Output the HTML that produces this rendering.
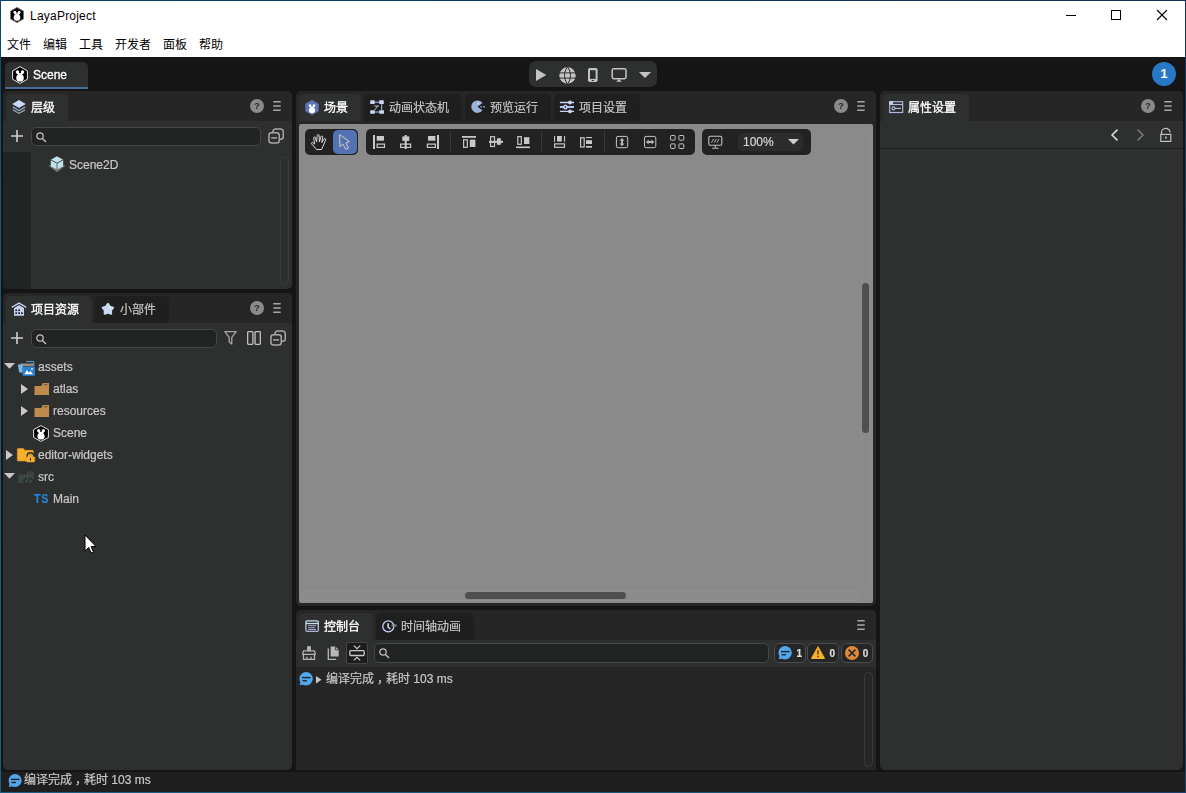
<!DOCTYPE html>
<html lang="zh-CN">
<head>
<meta charset="utf-8">
<title>LayaProject</title>
<style>
*{box-sizing:border-box;margin:0;padding:0}
html,body{width:1186px;height:793px;overflow:hidden;background:#151515}
body{position:relative;font-family:"Liberation Sans","Noto Sans CJK SC",sans-serif;font-size:12px;line-height:14px;color:#c8c8c8;cursor:default}
.a{position:absolute}
svg{position:absolute;display:block;overflow:visible}
.t{position:absolute;white-space:nowrap;line-height:14px;height:14px}
/* window frame */
#titlebar{left:1px;top:1px;width:1184px;height:56px;background:#fff;color:#000}
.menu{top:37px;color:#000;font-size:12px}
/* generic panel */
.panel{background:#2e3030;border-radius:5px;overflow:hidden;will-change:transform;-webkit-text-stroke:.2px}
#status{-webkit-text-stroke:.2px}
.hdr{left:0;top:0;right:0;height:30px;background:#262626}
.tab{top:3px;height:27px;border-radius:5px 5px 0 0;background:#1f1f1f;color:#c4c4c4}
.tab.on{background:#2e3030;color:#fff;-webkit-text-stroke:.3px #fff}
.tab .t{top:7px}
.help{width:14px;height:14px;border-radius:7px;background:#8a8a8a;color:#262727;font-weight:bold;font-size:9.5px;line-height:14.5px;text-align:center;-webkit-text-stroke:0;color:#2a2a2a}
.search{height:19px;border:1px solid #454747;border-radius:5px;background:#222323}
.grp{background:#222;border-radius:5px;height:26px;top:5px}
.sep{width:1px;background:#3a3a3a;top:2px;height:20px}
.cnt{top:3px;width:32px;height:20px;border:1px solid #4a4c4c;border-radius:5px;background:#262626}
.cnt .t{top:2.5px;font-weight:bold;color:#ddd;font-size:10px}
.row{left:0;height:22px;width:289px}
.row .t{top:4px;color:#c8c8c8}
.vtrack{width:9px;border:1px solid #393b3b;border-radius:5px}
</style>
</head>
<body>
<!-- TITLE BAR -->
<div class="a" id="titlebar">
  <div class="t" style="left:29px;top:8px;font-size:12px;letter-spacing:.22px">LayaProject</div>
  <div class="t menu" style="left:6px">文件</div>
  <div class="t menu" style="left:42px">编辑</div>
  <div class="t menu" style="left:78px">工具</div>
  <div class="t menu" style="left:114px">开发者</div>
  <div class="t menu" style="left:162px">面板</div>
  <div class="t menu" style="left:198px">帮助</div>
</div>

<!-- TOP DARK BAR -->
<div class="a" id="scenetab" style="will-change:transform;left:5px;top:62px;width:83px;height:27px;background:#2e3030;border-radius:5px 5px 0 0;border-bottom:2px solid #4a6a9c">
  <div class="t" style="left:28px;top:6px;color:#fff;-webkit-text-stroke:.3px #fff">Scene</div>
</div>
<div class="a" id="playstrip" style="left:529px;top:61px;width:128px;height:26px;border-radius:7px;background:#2e3030"></div>
<div class="a" id="badge" style="will-change:transform;left:1152px;top:62px;width:24px;height:24px;border-radius:12px;background:#2878c8;color:#fff;font-weight:bold;font-size:13px;line-height:24px;text-align:center">1</div>

<!-- P1 HIERARCHY -->
<div class="a panel" id="p1" style="left:3px;top:91px;width:289px;height:198px">
  <div class="a hdr"></div>
  <div class="a tab on" style="left:3px;width:62px"><div class="t" style="left:25px">层级</div></div>
  <div class="a help" style="left:247px;top:8px">?</div>
  <div class="a search" style="left:28px;top:36px;width:230px"></div>
  <div class="a" style="left:0;top:61px;width:28px;height:137px;background:#222323"></div>
  <div class="t" style="left:66px;top:67px">Scene2D</div>
  <div class="a vtrack" style="left:277px;top:65px;height:129px"></div>
</div>

<!-- P2 PROJECT -->
<div class="a panel" id="p2" style="left:3px;top:293px;width:289px;height:477px">
  <div class="a hdr"></div>
  <div class="a tab on" style="left:3px;width:86px"><div class="t" style="left:25px">项目资源</div></div>
  <div class="a tab" style="left:92px;width:74px"><div class="t" style="left:25px">小部件</div></div>
  <div class="a help" style="left:247px;top:8px">?</div>
  <div class="a search" style="left:28px;top:36px;width:186px"></div>
  <div class="a row" style="top:63px"><div class="t" style="left:35px">assets</div></div>
  <div class="a row" style="top:85px"><div class="t" style="left:50px">atlas</div></div>
  <div class="a row" style="top:107px"><div class="t" style="left:50px">resources</div></div>
  <div class="a row" style="top:129px"><div class="t" style="left:50px">Scene</div></div>
  <div class="a row" style="top:151px"><div class="t" style="left:35px">editor-widgets</div></div>
  <div class="a row" style="top:173px"><div class="t" style="left:35px">src</div></div>
  <div class="a row" style="top:195px"><div class="t" style="left:30.500px;color:#2484dc;font-weight:bold;font-size:13px;letter-spacing:.7px;-webkit-text-stroke:.15px;transform:scaleX(.83);transform-origin:0 50%">TS</div><div class="t" style="left:50px">Main</div></div>
</div>

<!-- P3 SCENE -->
<div class="a panel" id="p3" style="left:296px;top:91px;width:580px;height:515px;background:#262626">
  <div class="a hdr"></div>
  <div class="a tab on" style="left:3px;width:62px"><div class="t" style="left:25px">场景</div></div>
  <div class="a tab" style="left:68px;width:98px"><div class="t" style="left:25px">动画状态机</div></div>
  <div class="a tab" style="left:169px;width:86px"><div class="t" style="left:25px">预览运行</div></div>
  <div class="a tab" style="left:258px;width:86px"><div class="t" style="left:25px">项目设置</div></div>
  <div class="a help" style="left:538px;top:8px">?</div>
  <div class="a" id="viewport" style="left:3px;top:33px;width:574px;height:479px;background:#8a8a8a;border-radius:2px">
    <div class="a grp" style="left:6px;width:53px"><div class="a" style="left:28px;top:1px;width:24px;height:24px;border-radius:5px;background:#5272b4"></div></div>
    <div class="a grp" style="left:67px;width:329px">
      <div class="a sep" style="left:84px"></div>
      <div class="a sep" style="left:175px"></div>
      <div class="a sep" style="left:238px"></div>
    </div>
    <div class="a grp" style="left:403px;width:109px">
      <div class="a" style="left:36px;top:4px;width:65px;height:18px;border-radius:5px;background:#2c2c2c"><div class="t" style="left:5px;top:2px;color:#d4d4d4;-webkit-text-stroke:.2px #d4d4d4">100%</div></div>
    </div>
    <div class="a" style="left:562px;top:2px;width:10px;height:464px;border:1px solid #919191;border-radius:5px;opacity:.6"></div>
    <div class="a" style="left:2px;top:467px;width:558px;height:10px;border:1px solid #939393;border-radius:5px;opacity:.6"></div>
    <div class="a" style="left:563px;top:159px;width:7px;height:150px;border-radius:4px;background:#4f4f4f"></div>
    <div class="a" style="left:166px;top:468px;width:161px;height:7px;border-radius:4px;background:#4f4f4f"></div>
  </div>
</div>

<!-- P4 CONSOLE -->
<div class="a panel" id="p4" style="left:296px;top:610px;width:580px;height:160px;border-radius:5px 5px 0 0">
  <div class="a hdr"></div>
  <div class="a tab on" style="left:3px;width:74px"><div class="t" style="left:25px">控制台</div></div>
  <div class="a tab" style="left:80px;width:98px"><div class="t" style="left:25px">时间轴动画</div></div>
  <div class="a" id="ctb" style="left:0;top:30px;width:580px;height:27px">
    <div class="a" style="left:50px;top:2px;width:22px;height:22px;background:#1c1c1c;border:1px solid #454747;border-radius:2px"></div>
    <div class="a search" style="left:78px;top:3px;width:395px;height:20px"></div>
    <div class="a cnt" style="left:478px"><div class="t" style="left:21.5px">1</div></div>
    <div class="a cnt" style="left:511.400px"><div class="t" style="left:21px">0</div></div>
    <div class="a cnt" style="left:544.700px"><div class="t" style="left:21px">0</div></div>
  </div>
  <div class="a" id="log" style="left:0;top:57px;width:580px;height:103px;background:#262626">
    <div class="t" style="left:30px;top:5px">编译完成<span style="position:relative;left:3px">，</span>耗时 103 ms</div>
    <div class="a vtrack" style="left:568px;top:5px;height:95px"></div>
  </div>
</div>

<!-- P5 PROPERTIES -->
<div class="a panel" id="p5" style="left:880px;top:91px;width:303px;height:679px">
  <div class="a hdr"></div>
  <div class="a tab on" style="left:3px;width:86px"><div class="t" style="left:25px">属性设置</div></div>
  <div class="a help" style="left:261px;top:8px">?</div>
  <div class="a" style="left:0;top:57px;width:303px;height:1px;background:#1e1f1f"></div>
</div>

<!-- STATUS BAR -->
<div class="a" id="status" style="will-change:transform;left:1px;top:772px;width:1184px;height:20px;background:#1f1f1f">
  <div class="t" style="left:23px;top:1px;color:#c8c8c8">编译完成<span style="position:relative;left:3px">，</span>耗时 103 ms</div>
</div>

<!--ICONS-START-->
<!-- ICON LAYER (page coordinates) -->
<div class="a" id="icons" style="left:0;top:0;width:1186px;height:793px;z-index:20">

<!-- title icon -->
<svg style="left:10px;top:7px" width="14" height="16" viewBox="0 0 14 16"><path d="M7 .4 13.5 4.1v7.8L7 15.6.5 11.900V4.100z" fill="#000" stroke="#777" stroke-width=".9"/><circle cx="4.900" cy="5.300" r="1.400" fill="#fff"/><circle cx="9.100" cy="5.300" r="1.400" fill="#fff"/><path d="M3.900 6.200 5 5.200 7 6.600 9 5.200 10.100 6.200 8.600 8 5.400 8z" fill="#fff"/><circle cx="7" cy="10.600" r="3.300" fill="#fff"/></svg>
<!-- window controls -->
<svg style="left:1066px;top:15px" width="10" height="1" viewBox="0 0 10 1"><rect width="10" height="1" fill="#000"/></svg>
<svg style="left:1111px;top:10px" width="10" height="10" viewBox="0 0 10 10"><rect x=".5" y=".5" width="9" height="9" fill="none" stroke="#000" stroke-width="1"/></svg>
<svg style="left:1157px;top:10px" width="10" height="10" viewBox="0 0 10 10"><path d="M0 0 10 10M10 0 0 10" stroke="#000" stroke-width="1.100" fill="none"/></svg>

<!-- scene tab icon -->
<svg style="left:12px;top:66px" width="16" height="18" viewBox="0 0 16 18"><path d="M8 .6 15.400 4.800v8.400L8 17.400.6 13.200V4.800z" fill="#000" stroke="#e8e8e8" stroke-width="1"/><circle cx="5.500" cy="5.900" r="1.650" fill="#fff"/><circle cx="10.500" cy="5.900" r="1.650" fill="#fff"/><path d="M4.300 6.900 5.600 5.800 8 7.400 10.400 5.800 11.700 6.900 9.900 9 6.100 9z" fill="#fff"/><ellipse cx="8" cy="11.900" rx="3.800" ry="3.600" fill="#fff"/></svg>

<!-- play strip -->
<svg style="left:536px;top:69px" width="11" height="12" viewBox="0 0 11 12"><path d="M0 0 10.300 6 0 12z" fill="#c4c4c4"/></svg>
<svg style="left:558.500px;top:66.500px" width="17" height="17" viewBox="0 0 17 17"><circle cx="8.500" cy="8.500" r="8.200" fill="#c4c4c4"/><g fill="none" stroke="#2e3030" stroke-width="1"><path d="M0 5.900H17M0 11.100H17"/><path d="M8.500 .2C4.500 4.500 4.500 12.500 8.500 16.800M8.500 .2C12.500 4.500 12.500 12.500 8.500 16.800"/></g></svg>
<svg style="left:588px;top:68px" width="10" height="14" viewBox="0 0 10 14"><rect x="0" y="0" width="9.600" height="14" rx="1.800" fill="#c4c4c4"/><rect x="2" y="2.200" width="5.600" height="8.700" fill="#2e3030"/><rect x="3.800" y="12" width="2" height="1" fill="#2e3030"/></svg>
<svg style="left:611px;top:68px" width="16" height="14" viewBox="0 0 16 14"><rect x="1.200" y=".7" width="13.800" height="10" rx="1.600" fill="none" stroke="#c4c4c4" stroke-width="1.500"/><path d="M8 11 10.800 13.800H5.200z" fill="#c4c4c4"/></svg>
<svg style="left:639px;top:72px" width="12" height="6" viewBox="0 0 12 6"><path d="M0 0H12L6 6z" fill="#c4c4c4"/></svg>

<!-- P1 header -->
<svg style="left:12px;top:100px" width="14" height="14" viewBox="0 0 14 14"><path d="M.9 7 7 10.600 13.100 7" fill="none" stroke="#9dc3ec" stroke-width="1.100"/><path d="M.9 9.800 7 13.400 13.100 9.800" fill="none" stroke="#b0b0cc" stroke-width="1.100"/><path d="M7 0 13.800 4 7 8 .2 4z" fill="#c8d8f5"/></svg>
<svg style="left:273px;top:101px" width="8" height="10" viewBox="0 0 8 10"><path d="M.3 .8H7.700M.3 5H7.700M.3 9.200H7.700" stroke="#a8a8a8" stroke-width="1.500"/></svg>
<!-- P1 toolbar -->
<svg style="left:11px;top:130px" width="12" height="12" viewBox="0 0 12 12"><path d="M6 0V12M0 6H12" stroke="#d0d0d0" stroke-width="1.600"/></svg>
<svg style="left:36px;top:132px" width="11" height="11" viewBox="0 0 11 11"><circle cx="4" cy="4" r="3.200" fill="none" stroke="#c0c0c0" stroke-width="1.250"/><path d="M6.400 6.400 10 10" stroke="#c0c0c0" stroke-width="1.400"/></svg>
<svg style="left:268px;top:128px" width="16" height="16" viewBox="0 0 16 16"><g fill="none" stroke="#aaa6a4" stroke-width="1.500"><rect x=".95" y="4.750" width="10.300" height="10.300" rx="2.500"/><path d="M4.950 4.200V3.450a2.500 2.500 0 0 1 2.500-2.500h5.300a2.500 2.500 0 0 1 2.500 2.500v5.300a2.500 2.500 0 0 1-2.500 2.500H11.800"/><path d="M3.200 9.900H9"/></g></svg>
<!-- Scene2D cube -->
<svg style="left:49px;top:156px" width="16" height="16" viewBox="0 0 16 16"><path d="M.4 9.600 8 15.200 15.600 9.600" fill="none" stroke="#8a8585" stroke-width="1.200"/><path d="M8 .3 14.200 3.800V10.300L8 13.800 1.800 10.300V3.800z" fill="#bfe3ec"/><path d="M1.800 3.800 8 7.300 14.200 3.800" fill="none" stroke="#4a4444" stroke-width="1"/><path d="M8 7.300V13.800" fill="none" stroke="#857e7e" stroke-width="1.300"/></svg>

<!-- P2 header -->
<svg style="left:11px;top:302px" width="16" height="15" viewBox="0 0 16 15"><path d="M3 5.500 8 2.600 13 5.500V13.800H3z" fill="#c5d0f5"/><path d="M.8 5.400 8 1.100 15.200 5.400" fill="none" stroke="#c5d0f5" stroke-width="1.500"/><path d="M.8 6.900 8 2.600 15.200 6.900" fill="none" stroke="#2e3030" stroke-width="1"/><g fill="#2a2a2a"><rect x="4.300" y="7.400" width="1.800" height="1.700"/><rect x="7.200" y="7.400" width="1.800" height="1.700"/><rect x="4.300" y="10.300" width="1.800" height="1.700"/><rect x="7.200" y="10.300" width="1.800" height="1.700"/><rect x="10" y="10.300" width="1.800" height="1.700"/></g></svg>
<svg style="left:101px;top:302px" width="14" height="14" viewBox="0 0 14 14"><path d="M6.90 1.80 8.84 4.63 12.13 5.60 10.04 8.32 10.13 11.75 6.90 10.60 3.67 11.75 3.76 8.32 1.67 5.60 4.96 4.63z" fill="#c8d8f5" stroke="#c8d8f5" stroke-width="2" stroke-linejoin="round"/><path d="M8.200 4.700Q9.800 5.200 10 7" fill="none" stroke="#fffbea" stroke-width=".7"/></svg>
<svg style="left:273px;top:303px" width="8" height="10" viewBox="0 0 8 10"><path d="M.3 .8H7.700M.3 5H7.700M.3 9.200H7.700" stroke="#a8a8a8" stroke-width="1.500"/></svg>
<!-- P2 toolbar -->
<svg style="left:11px;top:332px" width="12" height="12" viewBox="0 0 12 12"><path d="M6 0V12M0 6H12" stroke="#d0d0d0" stroke-width="1.600"/></svg>
<svg style="left:36px;top:334px" width="11" height="11" viewBox="0 0 11 11"><circle cx="4" cy="4" r="3.200" fill="none" stroke="#c0c0c0" stroke-width="1.250"/><path d="M6.400 6.400 10 10" stroke="#c0c0c0" stroke-width="1.400"/></svg>
<svg style="left:224px;top:331px" width="13" height="14" viewBox="0 0 13 14"><path d="M.8 .7H12.200L7.800 6.300V13L5.200 11V6.300z" fill="none" stroke="#aaa6a4" stroke-width="1.300" stroke-linejoin="round"/></svg>
<svg style="left:247px;top:331px" width="14" height="14" viewBox="0 0 14 14"><rect x=".65" y=".65" width="5.300" height="12.700" rx=".8" fill="none" stroke="#c0c0c0" stroke-width="1.300"/><rect x="8.050" y=".65" width="5.300" height="12.700" rx=".8" fill="none" stroke="#c0c0c0" stroke-width="1.300"/></svg>
<svg style="left:270px;top:330px" width="16" height="16" viewBox="0 0 16 16"><g fill="none" stroke="#aaa6a4" stroke-width="1.500"><rect x=".95" y="4.750" width="10.300" height="10.300" rx="2.500"/><path d="M4.950 4.200V3.450a2.500 2.500 0 0 1 2.500-2.500h5.300a2.500 2.500 0 0 1 2.500 2.500v5.300a2.500 2.500 0 0 1-2.500 2.500H11.800"/><path d="M3.200 9.900H9"/></g></svg>
<!-- P2 tree -->
<svg style="left:3.500px;top:363px" width="11" height="6" viewBox="0 0 11 6"><path d="M0 0H11L5.500 5.700z" fill="#c8c8c8"/></svg>
<svg style="left:17px;top:360px" width="19" height="17" viewBox="0 0 19 17"><path d="M9.200 1.500H16.800V6" fill="none" stroke="#4a9ee0" stroke-width="1"/><rect x="3.300" y="3.500" width="13.700" height="2.800" fill="#8e8e8e"/><path d="M.8 4.500H5.800V12.600H2.200z" fill="#7ab8e8"/><rect x="5.500" y="6.800" width="12.500" height="9" fill="#2a82d0"/><path d="M7.300 14.300 10 9.900 12 12.700 13.600 11.100 16 14.300z" fill="#fff"/><circle cx="15" cy="8.900" r=".9" fill="#fff"/></svg>
<svg style="left:21px;top:384px" width="7" height="10" viewBox="0 0 7 10"><path d="M0 0 7 5 0 10z" fill="#c8c8c8"/></svg>
<svg style="left:34px;top:383px" width="15" height="12" viewBox="0 0 15 12"><path d="M.5 3H7.300L8.800 0H15V12H.5z" fill="#c08a4c"/><path d="M10 1.700H13.300" stroke="#5a4a3a" stroke-width="1"/></svg>
<svg style="left:21px;top:406px" width="7" height="10" viewBox="0 0 7 10"><path d="M0 0 7 5 0 10z" fill="#c8c8c8"/></svg>
<svg style="left:34px;top:405px" width="15" height="12" viewBox="0 0 15 12"><path d="M.5 3H7.300L8.800 0H15V12H.5z" fill="#c08a4c"/><path d="M10 1.700H13.300" stroke="#5a4a3a" stroke-width="1"/></svg>
<svg style="left:33px;top:424.500px" width="16" height="17" viewBox="0 0 16 17"><path d="M8 .6 15.400 4.600v7.800L8 16.400.6 12.400V4.600z" fill="#000" stroke="#e0e0e0" stroke-width="1"/><circle cx="5.600" cy="5.600" r="1.550" fill="#fff"/><circle cx="10.400" cy="5.600" r="1.550" fill="#fff"/><path d="M4.500 6.500 5.700 5.500 8 7 10.300 5.500 11.500 6.500 9.800 8.500 6.200 8.500z" fill="#fff"/><ellipse cx="8" cy="11.200" rx="3.600" ry="3.400" fill="#fff"/></svg>
<svg style="left:6px;top:450px" width="7" height="10" viewBox="0 0 7 10"><path d="M0 0 7 5 0 10z" fill="#c8c8c8"/></svg>
<svg style="left:17px;top:448px" width="18" height="14" viewBox="0 0 18 14"><path d="M1 .5H6.400L7.600 2.300H15.400Q16.300 2.300 16.300 3.200V12.100Q16.300 13 15.400 13H1Q.3 13 .3 12.100V1.300Q.3 .5 1 .5z" fill="#f5b02e" stroke="#e8952a" stroke-width=".6"/><path d="M10.700 9.200V8A2.700 2.700 0 0 1 16.100 8V9.200" fill="none" stroke="#2e3030" stroke-width="2.600"/><path d="M11.400 9.200V8A2 2 0 0 1 15.400 8V9.200" fill="none" stroke="#f5b02e" stroke-width="1.200"/><rect x="9.200" y="8.800" width="8.600" height="5.200" rx=".9" fill="#f5b02e" stroke="#e8952a" stroke-width=".5"/><path d="M13.500 10.200V12.500" stroke="#1e1e1e" stroke-width="1.100"/></svg>
<svg style="left:3.500px;top:473px" width="11" height="6" viewBox="0 0 11 6"><path d="M0 0H11L5.500 5.700z" fill="#c8c8c8"/></svg>
<svg style="left:18px;top:471px" width="17" height="15" viewBox="0 0 17 15"><path d="M.3 3.500H8.300L9.300 .5H15.800V12H.3z" fill="#3c4644"/><path d="M10 2H14.500" stroke="#2e3030" stroke-width="1"/><path d="M8.600 7 5.400 10.200 8.600 13.400M12.600 7 15.800 10.200 12.600 13.400M11.400 6.300 9.800 14" fill="none" stroke="#1f2c22" stroke-width="1.100"/></svg>

<!-- P3 tabs -->
<svg style="left:305px;top:99.500px" width="14" height="15" viewBox="0 0 14 15"><path d="M7 .4 13.200 3.900v7.200L7 14.600.8 11.100V3.900z" fill="#5b72bf" stroke="#7d8fd0" stroke-width=".6"/><circle cx="5" cy="5.500" r="1.250" fill="#fff"/><circle cx="9" cy="5.500" r="1.250" fill="#fff"/><path d="M4.100 6.200 5.100 5.400 7 6.700 8.900 5.400 9.900 6.200 8.400 8 5.600 8z" fill="#fff"/><ellipse cx="7" cy="10.300" rx="3.100" ry="3" fill="#fff"/></svg>
<svg style="left:370px;top:100px" width="14" height="14" viewBox="0 0 14 14"><g stroke="#c8c8f0" stroke-width=".9" fill="none"><path d="M4 2.200H10M11.700 4V10.500M4.500 12H9.500M4.200 6H9M7.600 6 4.600 10.300"/></g><rect x=".2" y=".2" width="4.500" height="3.800" rx=".6" fill="#ccd4f8"/><rect x="9.200" y=".2" width="4.600" height="3.800" rx=".6" fill="#ccd4f8"/><rect x=".2" y="10.200" width="4.600" height="3.600" rx=".6" fill="#ccd4f8"/><rect x="9.200" y="10.200" width="4.800" height="3.600" rx=".6" fill="#c0dde8"/></svg>
<svg style="left:471px;top:100px" width="14" height="14" viewBox="0 0 14 14"><path d="M6.400 6.700 11.500 3.100A6.200 6.200 0 1 0 11.500 10.300z" fill="#9ab3d8"/><circle cx="7.400" cy="3.500" r=".8" fill="#e8f0ff"/><rect x="9.400" y="6" width="1.600" height="1.500" fill="#8aa0d8"/><rect x="12.200" y="6" width="1.700" height="1.500" fill="#8ab0e8"/></svg>
<svg style="left:559px;top:100px" width="16" height="14" viewBox="0 0 16 14"><path d="M.9 2.500H15M.9 11.400H15" stroke="#c5d2f7" stroke-width="1.300"/><path d="M.9 7H15" stroke="#a9c8ee" stroke-width="2.100"/><circle cx="11" cy="2.500" r="1.900" fill="#cdd6ee"/><circle cx="11" cy="11.400" r="1.900" fill="#cdd6ee"/><ellipse cx="6.400" cy="7" rx="1.600" ry="2" fill="#5a4a8a" stroke="#eef0ff" stroke-width="1.100"/></svg>
<svg style="left:857px;top:101px" width="8" height="10" viewBox="0 0 8 10"><path d="M.3 .8H7.700M.3 5H7.700M.3 9.200H7.700" stroke="#a8a8a8" stroke-width="1.500"/></svg>

<!-- scene toolbar: hand + arrow -->
<svg style="left:311px;top:134px" width="16" height="16" viewBox="0 0 16 16"><path d="M5.600 15.500 .6 9.900C0 9 1 8 2 8.700L3.700 10.100 2.700 4.100C2.500 2.700 4 2.400 4.400 3.700L5.600 8 6.200 1.600C6.300 .2 8.100 .2 8.200 1.600L8.400 7.900 9.900 2.700C10.300 1.400 12 1.800 11.700 3.200L10.800 8.500 13 5.100C13.700 4 15.200 4.800 14.600 6.100L10.600 15.500z" fill="none" stroke="#dcdcdc" stroke-width="1" stroke-linejoin="round"/></svg>
<svg style="left:339px;top:134px" width="12" height="16" viewBox="0 0 12 16"><path d="M.6 .6 .9 12.600 3.800 10 6.800 15.400 9.600 14 6.900 9 10.400 7.600z" fill="none" stroke="#d8ccb8" stroke-width="1" stroke-linejoin="miter"/></svg>
<!-- scene toolbar group 2 (origin 366,129) -->
<svg style="left:366px;top:129px" width="329" height="26" viewBox="366 129 329 26"><g fill="#c8c8c8">
<rect x="373" y="135" width="2" height="14"/><rect x="376.700" y="136" width="7.300" height="4.700"/>
<rect x="404.700" y="135" width="2" height="14"/><rect x="402.300" y="136.400" width="7" height="4.500"/>
<rect x="437" y="135" width="2" height="14"/><rect x="428" y="136" width="7.400" height="4.700"/>
<rect x="462" y="136" width="14" height="1.800"/><rect x="469.800" y="139.600" width="5.600" height="7.400"/>
<rect x="489" y="140.800" width="14" height="2.100"/><rect x="497" y="138.200" width="3.800" height="6.600"/>
<rect x="516" y="146.500" width="14" height="1.600"/><rect x="524" y="137.200" width="5.400" height="6.800"/>
<rect x="554" y="136" width="1.100" height="5.800"/><rect x="564" y="136" width="1.100" height="5.800"/><rect x="557" y="136" width="4.800" height="5.500"/>
<rect x="586" y="137" width="6" height="1.100"/><rect x="586" y="140.200" width="6" height="3.800"/><rect x="586" y="146" width="6" height="1.700"/>
</g><g fill="none" stroke="#c8c8c8" stroke-width="1.200">
<rect x="377.100" y="144.100" width="7.400" height="3.300"/>
<rect x="400.600" y="144.100" width="10" height="3.300"/>
<rect x="427.400" y="144.100" width="8" height="3.300"/>
<rect x="463.600" y="139.800" width="3.700" height="7.500"/>
<rect x="490.600" y="136.700" width="3.900" height="9.800"/>
<rect x="517.800" y="136.600" width="3.500" height="7.700"/>
<rect x="554.600" y="143.900" width="9.900" height="3.400"/>
<rect x="580.600" y="137.800" width="3.600" height="9.200"/>
</g><g fill="none" stroke="#c4c4c4" stroke-width="1">
<rect x="616.400" y="136.400" width="11.300" height="11.300" rx="1.600"/>
<rect x="644.500" y="136.400" width="11.300" height="11.300" rx="1.600"/>
<rect x="670.600" y="135.500" width="4.500" height="4.700" rx=".7"/><rect x="678.900" y="135.500" width="4.900" height="4.700" rx=".7"/>
<rect x="670.600" y="143.900" width="4.500" height="4.600" rx=".7"/><rect x="678.900" y="143.900" width="4.900" height="4.600" rx=".7"/>
</g><g fill="#b4b4b4">
<path d="M622 137.900 624.600 140.700H623V143.500H624.600L622 146.300 619.400 143.500H621V140.700H619.400z"/>
<path d="M645.900 142 648.700 139.400V141H651.500V139.400L654.300 142 651.500 144.600V143H648.700V144.600z"/>
</g>
<rect x="450" y="131" width="1" height="20" fill="#3a3a3a"/><rect x="541" y="131" width="1" height="20" fill="#3a3a3a"/><rect x="604" y="131" width="1" height="20" fill="#3a3a3a"/>
</svg>
<!-- group 3: monitor + triangle -->
<svg style="left:708px;top:135px" width="15" height="14" viewBox="0 0 15 14"><rect x=".8" y="1.300" width="13" height="8.900" rx="1.400" fill="none" stroke="#c4c4c4" stroke-width="1.100"/><path d="M7.300 10.200V12.600M4.200 13.200H10.500" stroke="#c4c4c4" stroke-width="1.100" fill="none"/><path d="M3.600 7.600 5.600 3.800M6.300 7.600 8.300 3.800M9 7.600 11 3.800" stroke="#c4c4c4" stroke-width=".9" fill="none"/></svg>
<svg style="left:787.500px;top:139px" width="11" height="6" viewBox="0 0 11 6"><path d="M0 0H11L5.500 5.600z" fill="#d0d0d0"/></svg>

<!-- P4 console tabs -->
<svg style="left:305px;top:620px" width="14" height="12" viewBox="0 0 14 12"><defs><linearGradient id="cg" x1="0" y1="0" x2="0" y2="1"><stop offset="0" stop-color="#c8e0ec"/><stop offset="1" stop-color="#b0b0dc"/></linearGradient></defs><rect x=".9" y=".9" width="12.400" height="10.400" rx="1" fill="none" stroke="url(#cg)" stroke-width="1.300"/><path d="M1 3.500H13" stroke="#c8e0ec" stroke-width="1.300"/><path d="M3.200 5.700H11M3.200 7.700H10M3.200 9.500H11" stroke="#b4b8dc" stroke-width=".9"/></svg>
<svg style="left:382px;top:619.500px" width="15" height="13" viewBox="0 0 15 13"><circle cx="6.300" cy="6.400" r="5.500" fill="none" stroke="#c0cdea" stroke-width="1.300"/><path d="M6.100 3.200V7L8.400 9" fill="none" stroke="#dde2f2" stroke-width="1.500"/><rect x="9.600" y="4.400" width="4.900" height="2.100" fill="#8c8c8c"/></svg>
<svg style="left:857px;top:620px" width="8" height="10" viewBox="0 0 8 10"><path d="M.3 .8H7.700M.3 5H7.700M.3 9.200H7.700" stroke="#a8a8a8" stroke-width="1.500"/></svg>
<!-- console toolbar -->
<svg style="left:302px;top:646px" width="14" height="14" viewBox="0 0 14 14"><g fill="none" stroke="#b4b4b4" stroke-width="1.300"><rect x="5.700" y=".7" width="2.600" height="4" rx=".6" fill="#b4b4b4"/><path d="M1.500 4.800H12.500L13.300 8.400H.7z" stroke-linejoin="round"/><path d="M1.500 8.500V13.300H12.500V8.500M5 10.700V13.300M9 10.700V13.300"/></g></svg>
<svg style="left:327px;top:646px" width="12" height="14" viewBox="0 0 12 14"><path d="M3.600 .5H8.400L11.700 3.800V10.600H3.600z" fill="#b8b8b8"/><path d="M8.400 .5V3.800H11.700" fill="none" stroke="#2e3030" stroke-width=".8"/><path d="M1.300 2.500V13.300H9.200" fill="none" stroke="#b8b8b8" stroke-width="1.300"/></svg>
<svg style="left:349px;top:645px" width="16" height="16" viewBox="0 0 16 16"><g fill="none" stroke="#c8c8c8" stroke-width="1.300"><rect x=".8" y="5.600" width="14.400" height="4.900" rx=".9"/><path d="M4.800 .6 8 3.600 11.200 .6M4.800 15.400 8 12.400 11.200 15.400"/></g></svg>
<svg style="left:379px;top:648px" width="11" height="11" viewBox="0 0 11 11"><circle cx="4" cy="4" r="3.200" fill="none" stroke="#c0c0c0" stroke-width="1.250"/><path d="M6.400 6.400 10 10" stroke="#c0c0c0" stroke-width="1.400"/></svg>
<!-- counters -->
<svg style="left:778px;top:646px" width="14" height="14" viewBox="0 0 14 14"><circle cx="7.100" cy="6.700" r="6.700" fill="#4fa8ee"/><path d="M.8 13.300 1.700 9 5 12.500z" fill="#4fa8ee"/><rect x="3" y="4.900" width="8.600" height="1.400" fill="#262626"/><rect x="3.500" y="8" width="4.400" height="1.400" fill="#262626"/></svg>
<svg style="left:811.400px;top:646px" width="14" height="13" viewBox="0 0 14 13"><path d="M7 1 13.300 12.300H.7z" fill="#f5b22c" stroke="#f5b22c" stroke-width="1.200" stroke-linejoin="round"/><path d="M7 4.300V8.600" stroke="#7a3a1a" stroke-width="1.600"/><rect x="6.200" y="9.800" width="1.600" height="1.500" fill="#7a3a1a"/></svg>
<svg style="left:844.500px;top:646px" width="14" height="14" viewBox="0 0 14 14"><circle cx="7" cy="7" r="7" fill="#e08a3a"/><path d="M3.600 3.600 10.400 10.400M10.400 3.600 3.600 10.400" stroke="#262626" stroke-width="1.500"/></svg>
<!-- log row -->
<svg style="left:299px;top:672px" width="14" height="14" viewBox="0 0 14 14"><circle cx="7.100" cy="6.700" r="6.700" fill="#4fa8ee"/><path d="M.8 13.300 1.700 9 5 12.500z" fill="#4fa8ee"/><rect x="3" y="4.900" width="8.600" height="1.400" fill="#262626"/><rect x="3.500" y="8" width="4.400" height="1.400" fill="#262626"/></svg>
<svg style="left:316px;top:676px" width="6" height="8" viewBox="0 0 6 8"><path d="M0 0 5.500 3.700 0 7.400z" fill="#c8c8c8"/></svg>

<!-- P5 -->
<svg style="left:889px;top:101px" width="15" height="12" viewBox="0 0 15 12"><g fill="none" stroke="#b4b8da" stroke-width="1.150"><rect x=".7" y=".7" width="13" height="10.800"/><path d="M.7 3.500H13.700"/><circle cx="4.500" cy="7.400" r="1.500"/><path d="M6 7.400H12"/></g><rect x=".2" y=".2" width="3.800" height="3.300" fill="#c5d0f8"/></svg>
<svg style="left:1164px;top:101px" width="8" height="10" viewBox="0 0 8 10"><path d="M.3 .8H7.700M.3 5H7.700M.3 9.200H7.700" stroke="#a8a8a8" stroke-width="1.500"/></svg>
<svg style="left:1111px;top:129px" width="8" height="12" viewBox="0 0 8 12"><path d="M6.500 .6 1 6 6.500 11.400" fill="none" stroke="#dcdcdc" stroke-width="1.500"/></svg>
<svg style="left:1136px;top:129px" width="8" height="12" viewBox="0 0 8 12"><path d="M1.500 .6 7 6 1.500 11.400" fill="none" stroke="#787878" stroke-width="1.500"/></svg>
<svg style="left:1160px;top:128px" width="12" height="14" viewBox="0 0 12 14"><g fill="none" stroke="#c0c0c0" stroke-width="1.200"><rect x=".8" y="6.400" width="10" height="7"/><path d="M1.500 6.400V4.800A4.300 4.300 0 0 1 10.100 4.500"/></g><rect x="5.100" y="8.500" width="1.500" height="2.200" fill="#c0c0c0"/></svg>

<!-- status bar -->
<svg style="left:8px;top:773.500px" width="14" height="14" viewBox="0 0 14 14"><circle cx="7.100" cy="6.500" r="6.500" fill="#4fa8ee"/><path d="M.8 13 1.700 8.800 5 12.300z" fill="#4fa8ee"/><rect x="3" y="4.700" width="8.600" height="1.400" fill="#1f1f1f"/><rect x="3.500" y="7.800" width="4.400" height="1.400" fill="#1f1f1f"/></svg>
<!-- mouse cursor -->
<svg style="left:84.200px;top:533.800px" width="13" height="20" viewBox="0 0 13 20"><path d="M1 1V17L4.700 13.500 7.100 19.100 9.500 18.100 7.100 12.500H12z" fill="#fff" stroke="#000" stroke-width="1"/></svg>
</div>

<!--ICONS-END-->
<div class="a" style="left:0;top:0;width:1186px;height:1px;z-index:50;background:linear-gradient(to right,#06456a,#0b3a62 50%,#14305a)"></div>
<div class="a" style="left:0;top:792px;width:1186px;height:1px;z-index:50;background:linear-gradient(to right,#1b5e85,#1a5878 50%,#1e3f6e)"></div>
<div class="a" style="left:0;top:0;width:1px;height:793px;z-index:50;background:linear-gradient(to bottom,#06456a,#1b5a7e 25%,#1b5a7e 60%,#1b5e85)"></div>
<div class="a" style="left:1185px;top:0;width:1px;height:793px;z-index:50;background:linear-gradient(to bottom,#14305a,#1f5a7c 45%,#1f5a7c 60%,#1e3f6e)"></div>
</body>
</html>
